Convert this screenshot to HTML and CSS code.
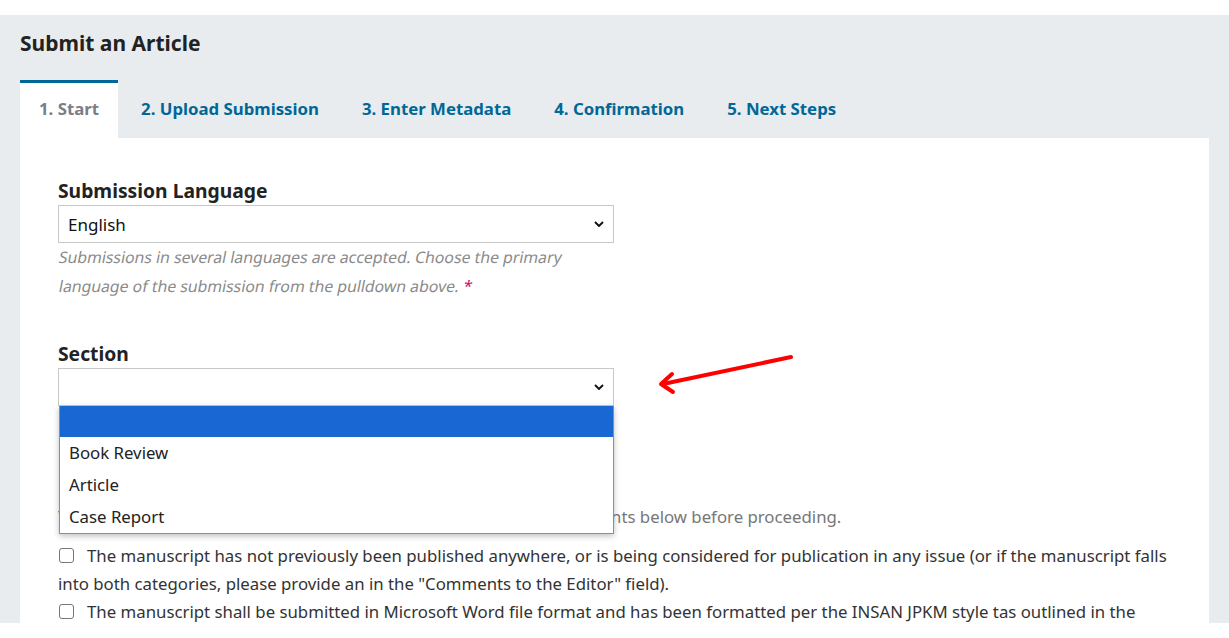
FILE: index.html
```html
<!DOCTYPE html>
<html>
<head>
<meta charset="utf-8">
<link rel="stylesheet" href="styles.css">
</head>
<body>
<div class="panel">
  <h1 class="title">Submit an Article</h1>
  <nav class="tabs">
    <a class="tab active">1. Start</a>
    <a class="tab">2. Upload Submission</a>
    <a class="tab">3. Enter Metadata</a>
    <a class="tab">4. Confirmation</a>
    <a class="tab">5. Next Steps</a>
  </nav>
  <div class="content">
    <div class="field">
      <label class="label">Submission Language</label>
      <div class="select"><span>English</span><svg class="chev" viewBox="0 0 10 6" width="10" height="6"><path d="M1 1 L5 5 L9 1" fill="none" stroke="#111" stroke-width="1.9"/></svg></div>
      <p class="help"><span class="line">Submissions in several languages are accepted. Choose the primary</span><br><span class="line">language of the submission from the pulldown above. <span class="req">*</span></span></p>
    </div>
    <div class="field section-field">
      <label class="label">Section</label>
      <div class="select"><span></span><svg class="chev" viewBox="0 0 10 6" width="10" height="6"><path d="M1 1 L5 5 L9 1" fill="none" stroke="#111" stroke-width="1.9"/></svg></div>
      <ul class="listbox">
        <li class="opt selected"></li>
        <li class="opt">Book Review</li>
        <li class="opt">Article</li>
        <li class="opt">Case Report</li>
      </ul>
    </div>
    <p class="req-intro">You must read and acknowledge that you've completed the requirements below before proceeding.</p>
    <p class="check"><span class="box"></span>The manuscript has not previously been published anywhere, or is being considered for publication in any issue (or if the manuscript falls into both categories, please provide an in the "Comments to the Editor" field).</p>
    <p class="check"><span class="box"></span>The manuscript shall be submitted in Microsoft Word file format and has been formatted per the INSAN JPKM style tas outlined in the Author Guidelines.</p>
  </div>
</div>
<svg class="arrow" width="160" height="50" viewBox="0 0 160 50">
  <path d="M151 7 L23 34" stroke="#ff0000" stroke-width="4" stroke-linecap="round" fill="none"/>
  <path d="M32 24 L21 34 L33 42" stroke="#ff0000" stroke-width="4" stroke-linecap="round" stroke-linejoin="round" fill="none"/>
</svg>
</body>
</html>
```
FILE: styles.css
```css
* { box-sizing: border-box; }
html, body { margin: 0; padding: 0; background: #fff; }
body {
  font-family: "Noto Sans", "Open Sans", sans-serif;
  color: #222;
  position: relative;
}
.panel {
  margin-top: 15px;
  height: 608px;
  overflow: hidden;
  background: #e9ecee;
  padding: 13px 20px 0 20px;
}
.title {
  margin: 0 0 22px 0;
  font-size: 21px;
  line-height: 30px;
  font-weight: 700;
  color: #222;
}
.tabs {
  display: flex;
  height: 58px;
}
.tab {
  display: flex;
  align-items: center;
  padding: 0 21.5px 5px 21.5px;
  font-size: 16.8px;
  font-weight: 700;
  color: #006798;
  border-top: 3px solid transparent;
}
.tab.active {
  background: #fff;
  color: #7b7d87;
  border-top-color: #006798;
  padding: 0 19px 5px 19px;
  margin-right: 1.5px;
}
.content {
  background: #fff;
  padding: 41px 38px 0 38px;
  height: 500px;
}
.field { position: relative; width: 556px; }
.label {
  display: block;
  font-size: 19.3px;
  line-height: 24px;
  font-weight: 700;
  color: #222;
  margin-bottom: 2px;
}
.select {
  height: 38px;
  border: 1px solid #c8c8c8;
  display: flex;
  align-items: center;
  justify-content: space-between;
  padding: 0 8px 0 9px;
  font-size: 17px;
  color: #111;
  background: #fff;
}
.chev { margin-right: 1px; }
.help {
  margin: 0;
  font-size: 15.8px;
  line-height: 29px;
  color: #8a8a8a;
  white-space: nowrap;
}
.help .line {
  display: inline-block;
  transform: skewX(-11deg);
  transform-origin: 0 70%;
}
.req { color: #d00a6c; }
.section-field { margin-top: 41px; }
.section-field .label { margin-bottom: 2px; }
.listbox {
  position: absolute;
  left: 1px;
  top: 64px;
  width: 555px;
  margin: 0;
  padding: 0;
  list-style: none;
  background: #fff;
  border: 1px solid #8e8e8e;
  border-top: none;
  box-shadow: 0 2px 6px rgba(0,0,0,0.25);
  z-index: 5;
}
.opt {
  height: 32px;
  line-height: 32px;
  padding-left: 9px;
  font-size: 16.8px;
  color: #222;
}
.opt.selected {
  height: 31px;
  background: #1967d2;
}
.req-intro {
  margin: 97px 0 11px 0;
  font-size: 16.8px;
  line-height: 28px;
  color: #777;
}
.check {
  margin: 0;
  font-size: 16.8px;
  line-height: 28px;
  color: #333;
}
.check .box {
  display: inline-block;
  width: 15px;
  height: 15px;
  border: 1px solid #767676;
  border-radius: 3px;
  vertical-align: -1px;
  margin: 0 13px 0 1px;
}
.arrow {
  position: absolute;
  left: 640px;
  top: 350px;
}
```
